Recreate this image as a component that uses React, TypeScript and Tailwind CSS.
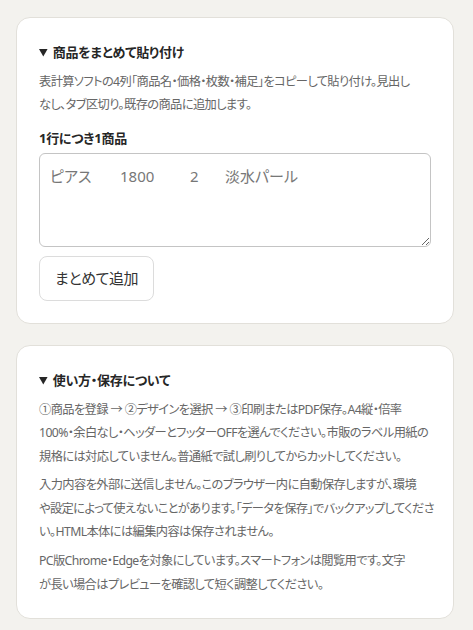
import React from "react";

const font = {
  fontFamily: '"Noto Sans", "Noto Sans CJK JP", sans-serif',
};

function Card({ title, children }: { title: string; children: React.ReactNode }) {
  return (
    <details open className="rounded-[14px] border border-[#e2e0da] bg-white px-[22px] pt-[22px] pb-[22px]">
      <summary className="mb-[6px] cursor-pointer text-[13px] font-bold leading-[24px] tracking-[-0.02em] text-[#262626]">
        {title}
      </summary>
      {children}
    </details>
  );
}

function Para({ lines }: { lines: string[] }) {
  return (
    <div className="whitespace-nowrap text-[12.25px] tracking-[-0.05em] text-[#666]">
      {lines.map((l) => (
        <div key={l} className="flex h-[23.4px] items-center leading-[23.4px]">
          {l}
        </div>
      ))}
    </div>
  );
}

export default function App() {
  return (
    <div
      className="min-h-[630px] w-full bg-[#f3f2ee] pl-[16px] pr-[19px] pt-[17px] pb-[12px] [font-feature-settings:'palt']"
      style={font}
    >
      <div className="flex flex-col gap-[21px]">
        <Card title="商品をまとめて貼り付け">
          <Para
            lines={[
              "表計算ソフトの4列「商品名・価格・枚数・補足」をコピーして貼り付け。見出し",
              "なし、タブ区切り。既存の商品に追加します。",
            ]}
          />
          <div className="mt-[11px] mb-[5px] text-[13px] font-bold leading-[20px] tracking-[-0.02em] text-[#262626]">
            1行につき1商品
          </div>
          <textarea
            className="block h-[94px] w-full rounded-[6px] border border-[#c4c4c4] bg-white px-[10px] py-[10px] text-[15px] leading-[24px] text-[#333] outline-none placeholder:text-[#777] [tab-size:35px]"
            placeholder={"ピアス\t1800\t2\t淡水パール"}
          />
          <button className="mt-[9px] h-[45px] rounded-[8px] border border-[#dcdcdc] bg-white px-[15px] text-[15px] tracking-[-0.03em] text-[#333]">
            まとめて追加
          </button>
        </Card>
        <Card title="使い方・保存について">
          <div className="flex flex-col gap-[5.5px]">
            <Para
              lines={[
                "①商品を登録 → ②デザインを選択 → ③印刷またはPDF保存。A4縦・倍率",
                "100%・余白なし・ヘッダーとフッターOFFを選んでください。市販のラベル用紙の",
                "規格には対応していません。普通紙で試し刷りしてからカットしてください。",
              ]}
            />
            <Para
              lines={[
                "入力内容を外部に送信しません。このブラウザー内に自動保存しますが、環境",
                "や設定によって使えないことがあります。「データを保存」でバックアップしてくださ",
                "い。HTML本体には編集内容は保存されません。",
              ]}
            />
            <Para
              lines={[
                "PC版Chrome・Edgeを対象にしています。スマートフォンは閲覧用です。文字",
                "が長い場合はプレビューを確認して短く調整してください。",
              ]}
            />
          </div>
        </Card>
      </div>
    </div>
  );
}
